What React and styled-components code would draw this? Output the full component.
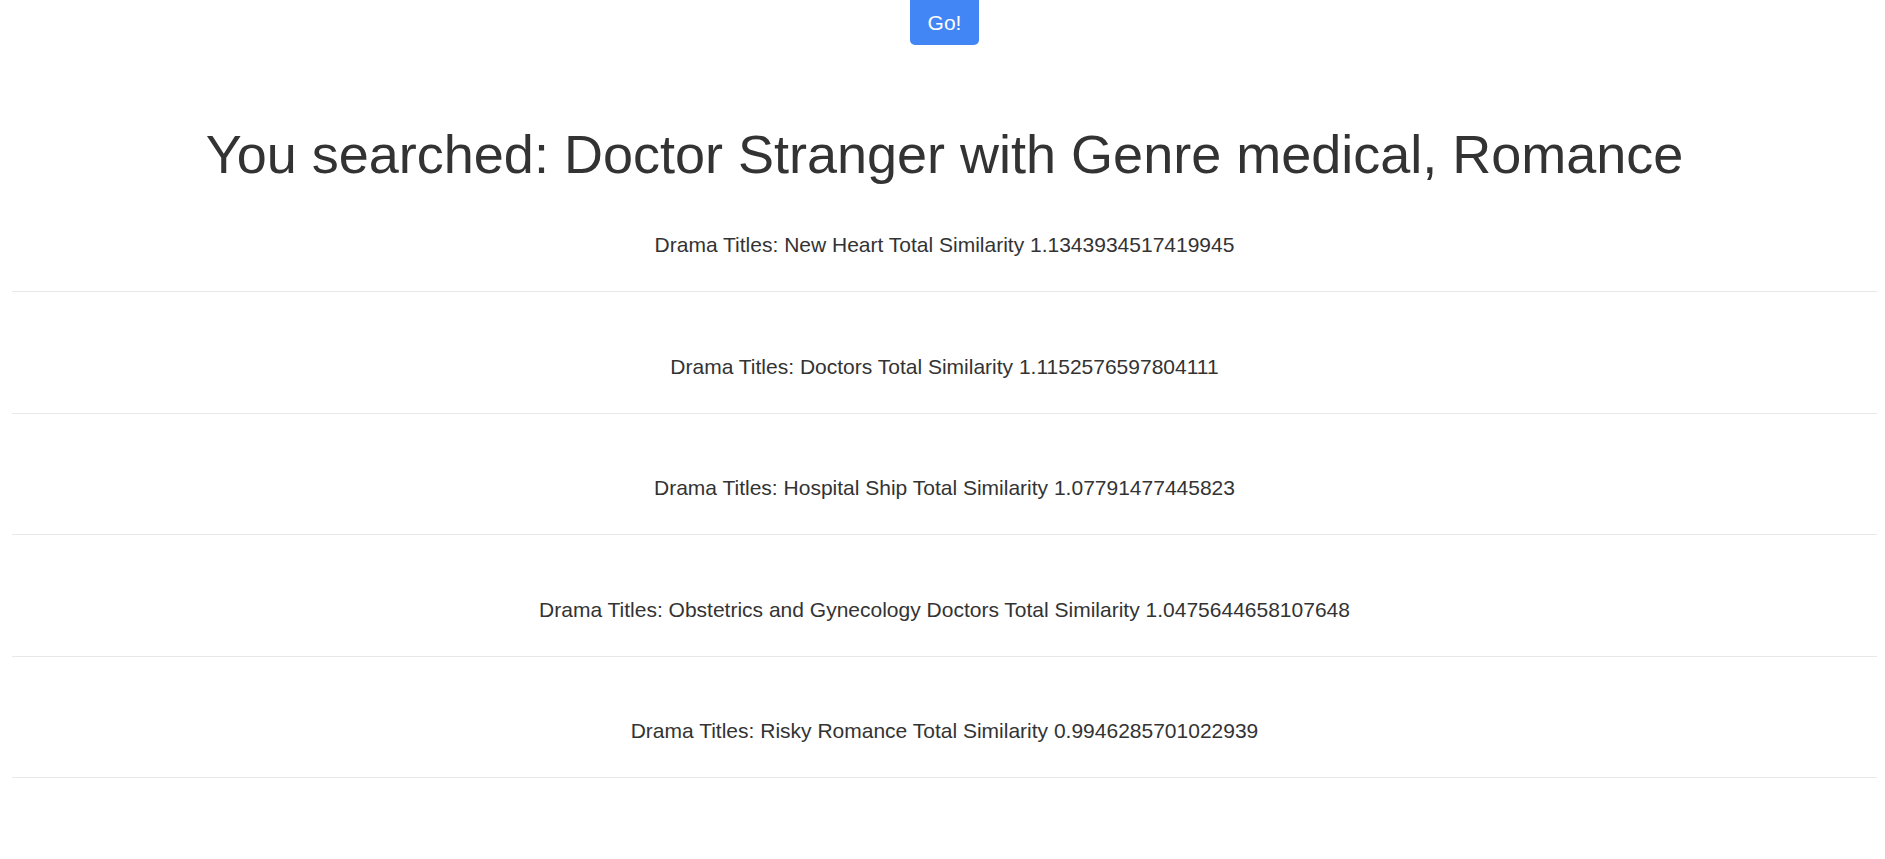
import React from 'react';
import styled, { createGlobalStyle } from 'styled-components';

const GlobalStyle = createGlobalStyle`
  html, body {
    margin: 0;
    padding: 0;
    background: #fff;
  }
  body {
    font-family: "Liberation Sans", Arial, Helvetica, sans-serif;
    color: #333;
  }
`;

const Page = styled.div`
  padding: 0 8px 0 12px;
`;

const SearchBar = styled.div`
  display: flex;
  justify-content: center;
  margin-top: -5px;
`;

const GoButton = styled.button`
  width: 69px;
  height: 50px;
  border: none;
  border-radius: 5px;
  background: #4285f4;
  color: #fff;
  font-family: inherit;
  font-size: 21px;
  padding: 6px 0 0;
  cursor: pointer;
`;

const Heading = styled.h1`
  margin: 80px 0 0;
  font-size: 54px;
  font-weight: 400;
  line-height: 1.1;
  text-align: center;
`;

const ResultList = styled.div`
  margin-top: 46px;
`;

const ResultText = styled.p`
  margin: 0;
  font-size: 21px;
  line-height: 30px;
  text-align: center;
`;

const Divider = styled.hr`
  margin: 31px 0 59.5px;
  border: 0;
  border-top: 1px solid #e8e8e8;
`;

const results = [
  { title: 'New Heart', score: '1.1343934517419945' },
  { title: 'Doctors', score: '1.1152576597804111' },
  { title: 'Hospital Ship', score: '1.07791477445823' },
  { title: 'Obstetrics and Gynecology Doctors', score: '1.0475644658107648' },
  { title: 'Risky Romance', score: '0.9946285701022939' },
];

const App = () => {
  return (
    <Page>
      <GlobalStyle />
      <SearchBar>
        <GoButton>Go!</GoButton>
      </SearchBar>
      <Heading>You searched: Doctor Stranger with Genre medical, Romance</Heading>
      <ResultList>
        {results.map((r) => (
          <div key={r.title}>
            <ResultText>
              Drama Titles: {r.title} Total Similarity {r.score}
            </ResultText>
            <Divider />
          </div>
        ))}
      </ResultList>
    </Page>
  );
};

export default App;
